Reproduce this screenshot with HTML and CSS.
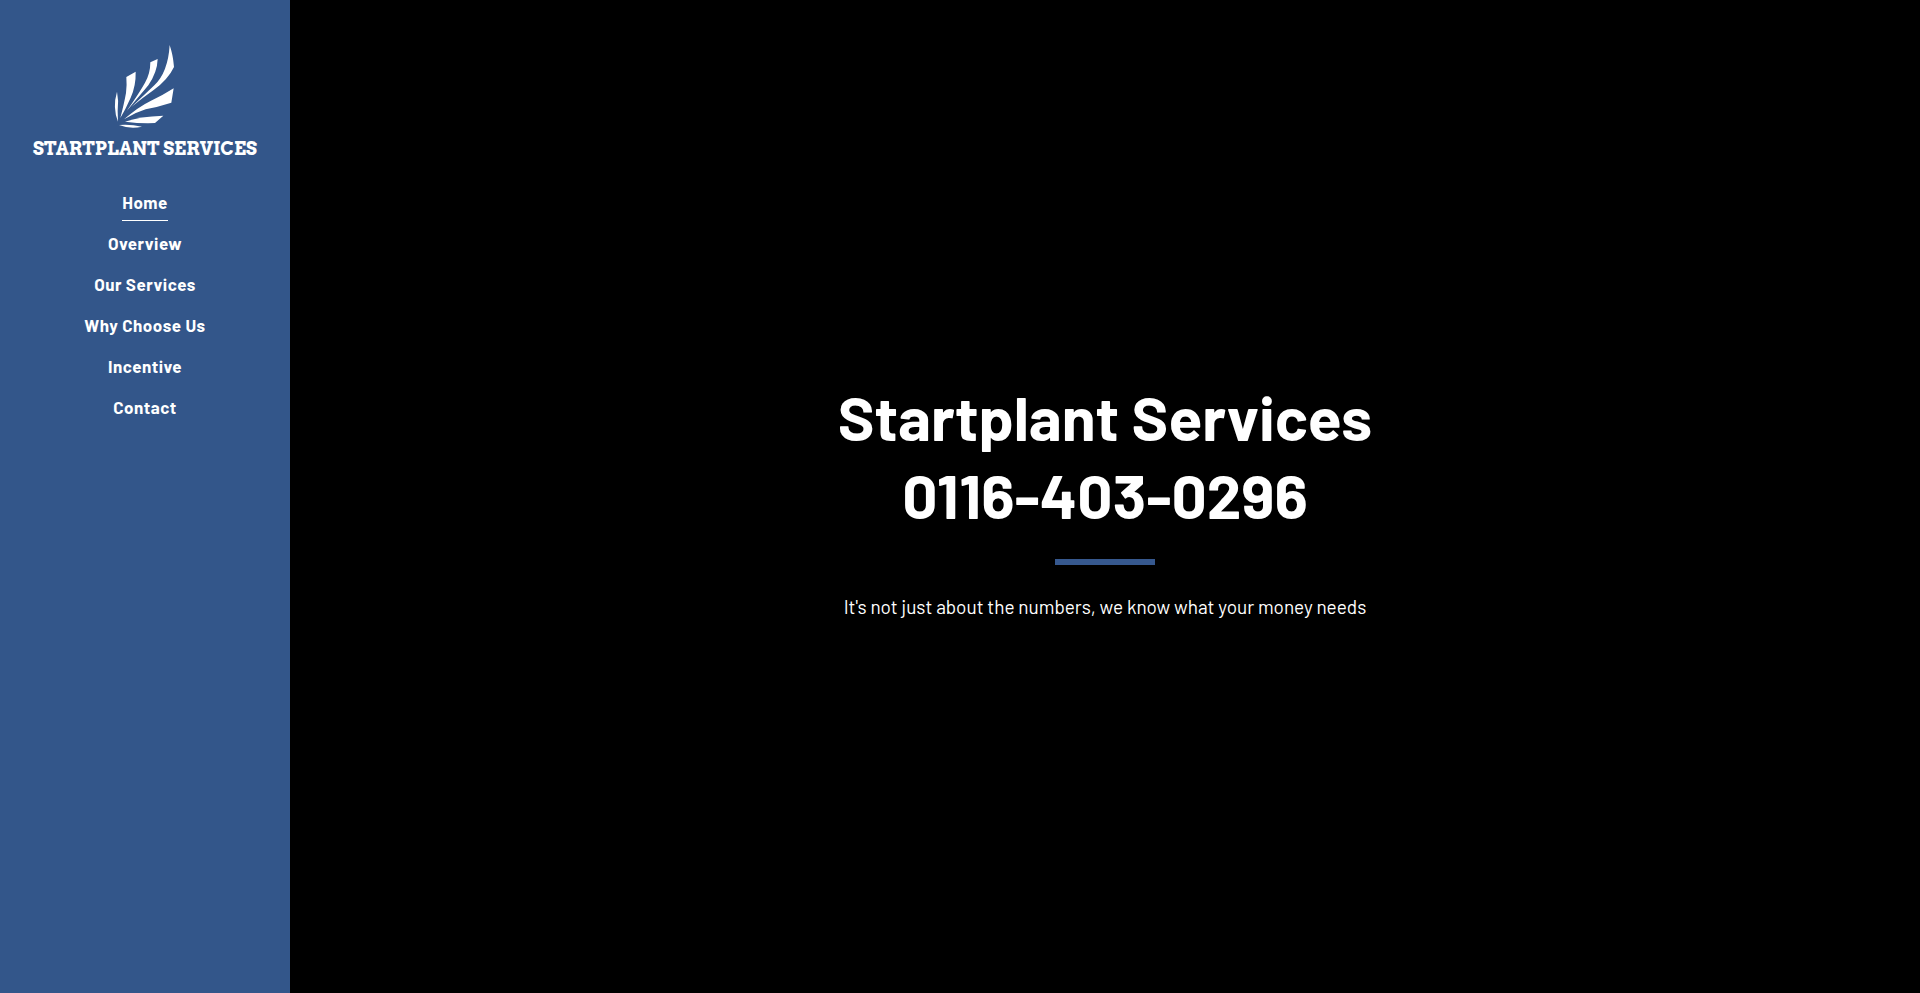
FILE: index.html
```
<!DOCTYPE html>
<html lang="en">
<head>
  <meta charset="UTF-8">
  <meta name="viewport" content="width=device-width, initial-scale=1.0">
  <title>Startplant Services</title>
  <link rel="stylesheet" href="styles.css">
</head>
<body>
  <header class="sidebar">
    <a class="logo" href="#home">
      <svg class="logo-mark" viewBox="0 0 270 300" aria-hidden="true">
        <path d="M209 30C215 49 220 68 222 96Q204 134 160 166Q130 187 94 216Q137 176 163 151Q204 112 209 30Z"/>
        <path d="M151 82L173 72Q172 111 145 151Q120 181 80 228Q119 172 135 143Q151 116 151 82Z"/>
        <path d="M79 126L107 110Q108 153 92 188Q77 222 61 249Q72 207 78 174Q81 149 79 126Z"/>
        <path d="M51 170Q57 199 53 228L54 260Q37 217 51 170Z"/>
        <path d="M72 253Q114 216 153 197Q187 182 221 160L214 203Q173 216 137 223Q104 233 72 253Z"/>
        <path d="M75 260Q119 244 190 242L165 264Q124 266 75 260Z"/>
        <path d="M57 270Q91 267 126 275Q90 283 57 270Z"/>
      </svg>
      <span class="logo-text">STARTPLANT SERVICES</span>
    </a>
    <nav class="menu">
      <a class="active" href="#home">Home</a>
      <a href="#overview">Overview</a>
      <a href="#services">Our Services</a>
      <a href="#why">Why Choose Us</a>
      <a href="#incentive">Incentive</a>
      <a href="#contact">Contact</a>
    </nav>
  </header>

  <main class="hero" id="home">
    <h1>Startplant Services<br>0116-403-0296</h1>
    <div class="divider"></div>
    <p>It's not just about the numbers, we know what your money needs</p>
  </main>
</body>
</html>
```
FILE: styles.css
```
* {
  box-sizing: border-box;
}
body {
  margin: 0;
  min-height: 100vh;
  display: flex;
  background: #000;
  color: #fff;
  font-family: Barlow, Roboto, sans-serif;
}
a {
  color: inherit;
  text-decoration: none;
}

/* sidebar */
.sidebar {
  flex: 0 0 290px;
  padding-top: 35px;
  background: #33568a;
  text-align: center;
}
.logo {
  display: block;
}
.logo-mark {
  display: block;
  width: 90px;
  height: 100px;
  margin: 0 auto;
  fill: #fff;
}
.logo-text {
  display: block;
  font-family: Arvo, "DejaVu Serif", serif;
  font-size: 18px;
  font-weight: bold;
  line-height: 28px;
}
.menu {
  display: flex;
  flex-direction: column;
  align-items: center;
  gap: 4px;
  margin-top: 21px;
}
.menu a {
  padding: 6px 0;
  border-bottom: 1px solid transparent;
  font-size: 17px;
  font-weight: bold;
  line-height: 24px;
  letter-spacing: 0.5px;
}
.menu a.active,
.menu a:hover {
  border-bottom-color: #fff;
}

/* main area */
.hero {
  flex: 1;
  display: flex;
  flex-direction: column;
  align-items: center;
  justify-content: center;
  padding: 6px 20px 0;
  text-align: center;
}
.hero h1 {
  margin: 0;
  font-size: 62px;
  font-weight: bold;
  line-height: 78px;
}
.divider {
  width: 100px;
  height: 6px;
  margin: 26px 0 27px;
  background: #36588e;
}
.hero p {
  margin: 0;
  font-size: 19px;
  line-height: 30px;
}
```
